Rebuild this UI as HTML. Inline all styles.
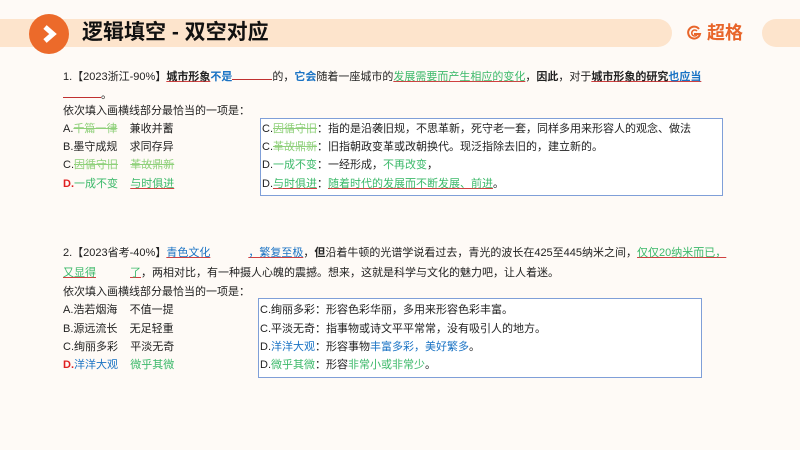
<!DOCTYPE html>
<html><head><meta charset="utf-8"><style>
body{margin:0;width:800px;height:450px;background:#fefaf6;position:relative;overflow:hidden;font-family:"Liberation Sans","Noto Sans CJK SC",sans-serif;color:#222;font-size:11px}
.a{position:absolute;white-space:nowrap;line-height:14px}
.bl{color:#1a73c4}.gr{color:#3cb96a}.lg{color:#8fd07a}.rd{color:#e02020}
.ul{text-decoration:underline;text-decoration-color:#d04040}
.st{text-decoration:line-through}
b{font-weight:bold}
.blank{display:inline-block;border-bottom:1px solid #c03030;height:11px}
.box{position:absolute;border:1.5px solid #7f9fd8;background:#fff}
</style></head><body>
<div style="position:absolute;left:0;top:19px;width:640px;height:28px;background:#fde4cc"></div>
<div style="position:absolute;left:640px;top:19px;width:32px;height:28px;background:#fde4cc;border-radius:0 14px 14px 0"></div>
<div style="position:absolute;left:762px;top:19px;width:50px;height:28px;background:#fde4cc;border-radius:14px 0 0 14px"></div>
<div style="position:absolute;left:29px;top:14px;width:40px;height:40px;border-radius:50%;background:#ec6a2a"></div>
<svg style="position:absolute;left:38px;top:22px" width="24" height="24" viewBox="0 0 24 24"><path d="M7 5 L15 12 L7 19" stroke="#fff" stroke-width="5" fill="none" stroke-linejoin="miter"/></svg>
<div class="a" style="left:82px;top:20px;font-size:21px;line-height:26px;font-weight:bold;color:#111">逻辑填空 - 双空对应</div>
<svg style="position:absolute;left:686px;top:25px" width="16" height="16" viewBox="0 0 16 16"><path d="M13 4 A6 6 0 1 0 14 9 H8" stroke="#e8652a" stroke-width="2" fill="none"/><path d="M11 6 A3 3 0 1 0 11 10" stroke="#e8652a" stroke-width="1.6" fill="none"/></svg>
<div class="a" style="left:707px;top:22px;font-size:18px;line-height:22px;font-weight:bold;color:#e8652a">超格</div>

<div class="a" style="left:63px;top:68px">1.【2023浙江-90%】<b class="ul">城市形象</b><b class="bl">不是</b><span class="blank" style="width:40px"></span>的，<b class="bl">它会</b>随着一座城市的<span class="gr ul">发展需要而产生相应的变化</span>，<b>因此</b>，对于<b class="ul">城市形象的研究</b><b class="bl ul">也应当</b></div>
<div class="a" style="left:63px;top:86px"><span class="blank" style="width:38px"></span>。</div>
<div class="a" style="left:63px;top:104px">依次填入画横线部分最恰当的一项是：</div>
<div class="a" style="left:63px;top:122px">A.<span class="lg st">千篇一律</span>&nbsp;&nbsp;&nbsp;&nbsp;兼收并蓄</div>
<div class="a" style="left:63px;top:140px">B.墨守成规&nbsp;&nbsp;&nbsp;&nbsp;求同存异</div>
<div class="a" style="left:63px;top:158px">C.<span class="lg st">因循守旧</span>&nbsp;&nbsp;&nbsp;&nbsp;<span class="lg st">革故鼎新</span></div>
<div class="a" style="left:63px;top:177px"><b class="rd">D.</b><span class="gr">一成不变</span>&nbsp;&nbsp;&nbsp;&nbsp;<span class="gr ul">与时俱进</span></div>
<div class="box" style="left:260px;top:118px;width:461px;height:76px"></div>
<div class="a" style="left:262px;top:122px">C.<span class="lg st">因循守旧</span>：指的是沿袭旧规，不思革新，死守老一套，同样多用来形容人的观念、做法</div>
<div class="a" style="left:262px;top:140px">C.<span class="lg st">革故鼎新</span>：旧指朝政变革或改朝换代。现泛指除去旧的，建立新的。</div>
<div class="a" style="left:262px;top:158px">D.<span class="gr">一成不变</span>：一经形成，<span class="gr">不再改变</span>，</div>
<div class="a" style="left:262px;top:177px">D.<span class="gr ul">与时俱进</span>：<span class="gr ul">随着时代的发展而不断发展、前进</span>。</div>

<div class="a" style="left:63px;top:246px">2.【2023省考-40%】<span class="bl ul">青色文化<span style="display:inline-block;width:38px"></span>，繁复至极</span>，<b>但</b>沿着牛顿的光谱学说看过去，青光的波长在425至445纳米之间，<span class="gr ul">仅仅20纳米而已，</span></div>
<div class="a" style="left:63px;top:266px"><span class="gr ul">又显得<span style="display:inline-block;width:34px"></span>了</span>，两相对比，有一种摄人心魄的震撼。想来，这就是科学与文化的魅力吧，让人着迷。</div>
<div class="a" style="left:63px;top:285px">依次填入画横线部分最恰当的一项是：</div>
<div class="a" style="left:63px;top:303px">A.浩若烟海&nbsp;&nbsp;&nbsp;&nbsp;不值一提</div>
<div class="a" style="left:63px;top:322px">B.源远流长&nbsp;&nbsp;&nbsp;&nbsp;无足轻重</div>
<div class="a" style="left:63px;top:340px">C.绚丽多彩&nbsp;&nbsp;&nbsp;&nbsp;平淡无奇</div>
<div class="a" style="left:63px;top:358px"><b class="rd">D.</b><span class="bl">洋洋大观</span>&nbsp;&nbsp;&nbsp;&nbsp;<span class="gr">微乎其微</span></div>
<div class="box" style="left:258px;top:298px;width:442px;height:78px"></div>
<div class="a" style="left:260px;top:303px">C.绚丽多彩：形容色彩华丽，多用来形容色彩丰富。</div>
<div class="a" style="left:260px;top:322px">C.平淡无奇：指事物或诗文平平常常，没有吸引人的地方。</div>
<div class="a" style="left:260px;top:340px">D.<span class="bl">洋洋大观</span>：形容事物<span class="bl">丰富多彩，美好繁多</span>。</div>
<div class="a" style="left:260px;top:358px">D.<span class="gr">微乎其微</span>：形容<span class="gr">非常小或非常少</span>。</div>
</body></html>
